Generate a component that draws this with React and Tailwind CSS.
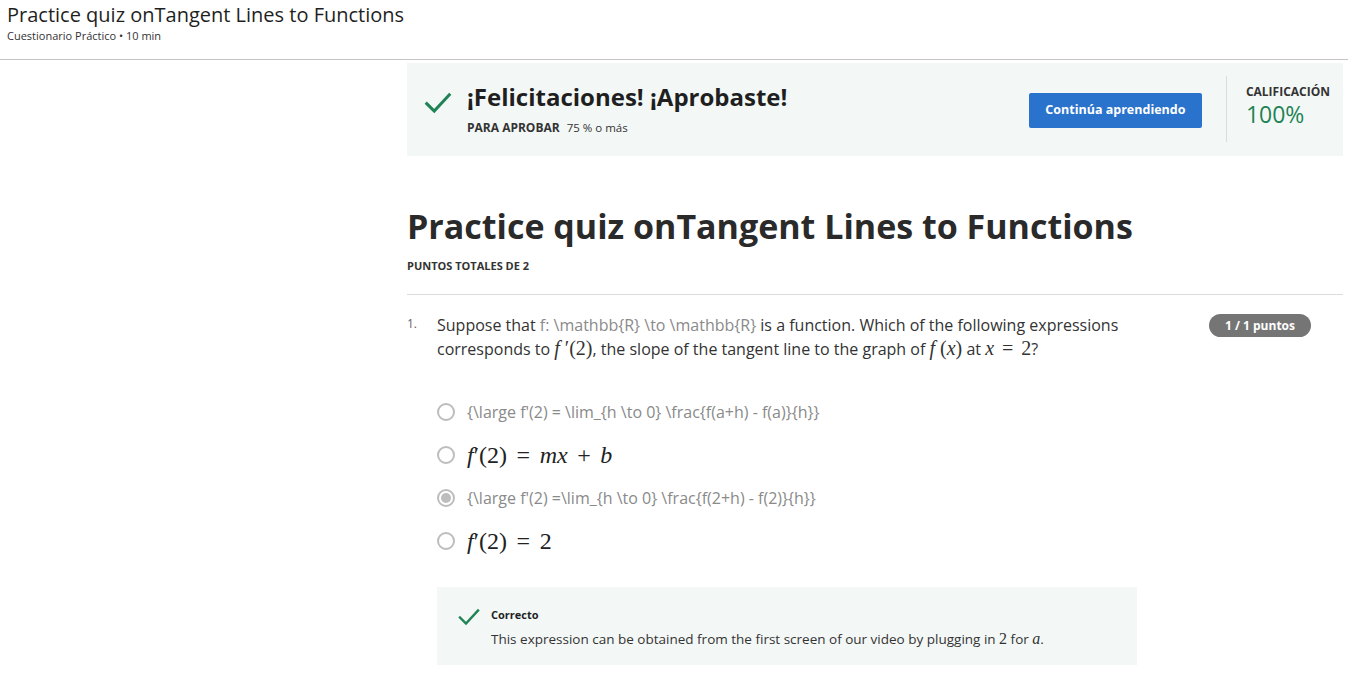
import React from 'react';

const sans = { fontFamily: '"Open Sans", "Noto Sans", sans-serif' };

// KaTeX-ish math rendering with a serif stack
const M = ({ children, className = '' }) => (
  <span className={`font-['Liberation_Serif','DejaVu_Serif',serif] ${className}`}>{children}</span>
);
const I = ({ children }) => <i className="italic">{children}</i>;
const Op = ({ children }) => <span className="mx-[0.4em]">{children}</span>;

const Check = ({ className }) => (
  <svg viewBox="0 0 24 24" className={className} fill="none" stroke="currentColor" strokeWidth="2.4" strokeLinecap="square">
    <path d="M3 12.5 L9 18.5 L21 5.5" />
  </svg>
);

const Radio = ({ checked }) => (
  <span className="w-[18px] h-[18px] rounded-full border-2 border-[#bdbdbd] bg-white flex items-center justify-center shrink-0">
    {checked && <span className="w-[10px] h-[10px] rounded-full bg-[#bdbdbd]" />}
  </span>
);

const options = [
  { raw: true, text: "{\\large f'(2) = \\lim_{h \\to 0} \\frac{f(a+h) - f(a)}{h}}" },
  { raw: false, node: <><I>f</I>′(2)<Op>=</Op><I>mx</I><Op>+</Op><I>b</I></> },
  { raw: true, checked: true, text: "{\\large f'(2) =\\lim_{h \\to 0} \\frac{f(2+h) - f(2)}{h}}" },
  { raw: false, node: <><I>f</I>′(2)<Op>=</Op>2</> },
];

export default function App() {
  return (
    <div className="min-h-screen bg-white text-[#1f1f1f]" style={sans}>
      {/* top header */}
      <header className="h-[60px] border-b border-[#c4c4c4] px-[7px] pt-[2px]">
        <h1 className="text-[20px] leading-[26px] text-[#1f1f1f]">Practice quiz onTangent Lines to Functions</h1>
        <p className="text-[11px] leading-[16px] text-[#333]">Cuestionario Práctico • 10 min</p>
      </header>

      <main className="ml-[407px] mr-[5px] pt-[3px]">
        {/* pass banner */}
        <section className="bg-[#f3f8f7] h-[93px] flex items-center pl-[16px] pr-[13px]">
          <Check className="w-[30px] h-[30px] text-[#1f8354] -mt-[14px]" />
          <div className="ml-[14px] -mt-[2px]">
            <h2 className="text-[24px] leading-[30px] font-bold text-[#1f1f1f]">¡Felicitaciones! ¡Aprobaste!</h2>
            <p className="text-[12px] leading-[16px] mt-[8px] text-[#333]">
              <span className="font-bold">PARA APROBAR</span>
              <span className="ml-[7px] text-[11.5px]">75 % o más</span>
            </p>
          </div>
          <button className="ml-auto bg-[#2a73cc] text-white font-bold text-[12.5px] w-[173px] h-[35px] rounded-[2px] mt-[2px]">
            Continúa aprendiendo
          </button>
          <div className="w-px h-[66px] bg-[#dcdcdc] ml-[24px] -mt-[2px]" />
          <div className="ml-[19px] -mt-[8px]">
            <div className="text-[12px] font-bold leading-[16px] text-[#333]">CALIFICACIÓN</div>
            <div className="text-[23px] leading-[28px] text-[#1f8354]">100%</div>
          </div>
        </section>

        {/* quiz heading */}
        <h2 className="mt-[48px] text-[34px] leading-[44px] font-bold text-[#2a2a2a]">Practice quiz onTangent Lines to Functions</h2>
        <p className="mt-[10px] text-[11px] font-bold leading-[16px] text-[#333]">PUNTOS TOTALES DE 2</p>
        <div className="mt-[20px] border-t border-[#dcdcdc]" />

        {/* question */}
        <div className="flex pt-[18px]">
          <span className="w-[30px] text-[12px] text-[#666] pt-[2px]">1.</span>
          <div className="w-[740px] text-[16px] leading-[24px] text-[#333]">
            Suppose that <span className="text-[#8a8a8a]">f: \mathbb{'{'}R{'}'} \to \mathbb{'{'}R{'}'}</span> is a function. Which of the following expressions<br />
            corresponds to <M className="text-[20px] leading-none"><I>f</I> ′(2)</M>, the slope of the tangent line to the graph of <M className="text-[20px] leading-none"><I>f</I> (<I>x</I>)</M> at <M className="text-[20px] leading-none"><I>x</I><Op>=</Op>2</M>?
          </div>
          <span className="ml-auto mr-[32px] mt-[1px] h-[23px] px-[16px] rounded-full bg-[#757575] text-white text-[12px] font-bold leading-[23px]">1 / 1 puntos</span>
        </div>

        {/* options */}
        <div className="ml-[30px] mt-[38px] flex flex-col gap-[17px]">
          {options.map((o, i) => (
            <div key={i} className="flex items-center h-[26px] gap-[12px]">
              <Radio checked={o.checked} />
              {o.raw ? (
                <span className="text-[16px] text-[#8a8a8a]">{o.text}</span>
              ) : (
                <M className="text-[24px] text-[#222]">{o.node}</M>
              )}
            </div>
          ))}
        </div>

        {/* feedback */}
        <div className="ml-[30px] mt-[33px] w-[700px] h-[78px] bg-[#f3f8f7] pl-[20px] pt-[18px] flex">
          <Check className="w-[24px] h-[24px] text-[#1f8354] shrink-0" />
          <div className="ml-[10px]">
            <p className="text-[11px] font-bold leading-[16px] pt-[2px] text-[#1f1f1f]">Correcto</p>
            <p className="text-[13.5px] leading-[20px] mt-[6px] text-[#333]">
              This expression can be obtained from the first screen of our video by plugging in <M className="text-[16px]">2</M> for <M className="text-[16px]"><I>a</I></M>.
            </p>
          </div>
        </div>
      </main>
    </div>
  );
}
